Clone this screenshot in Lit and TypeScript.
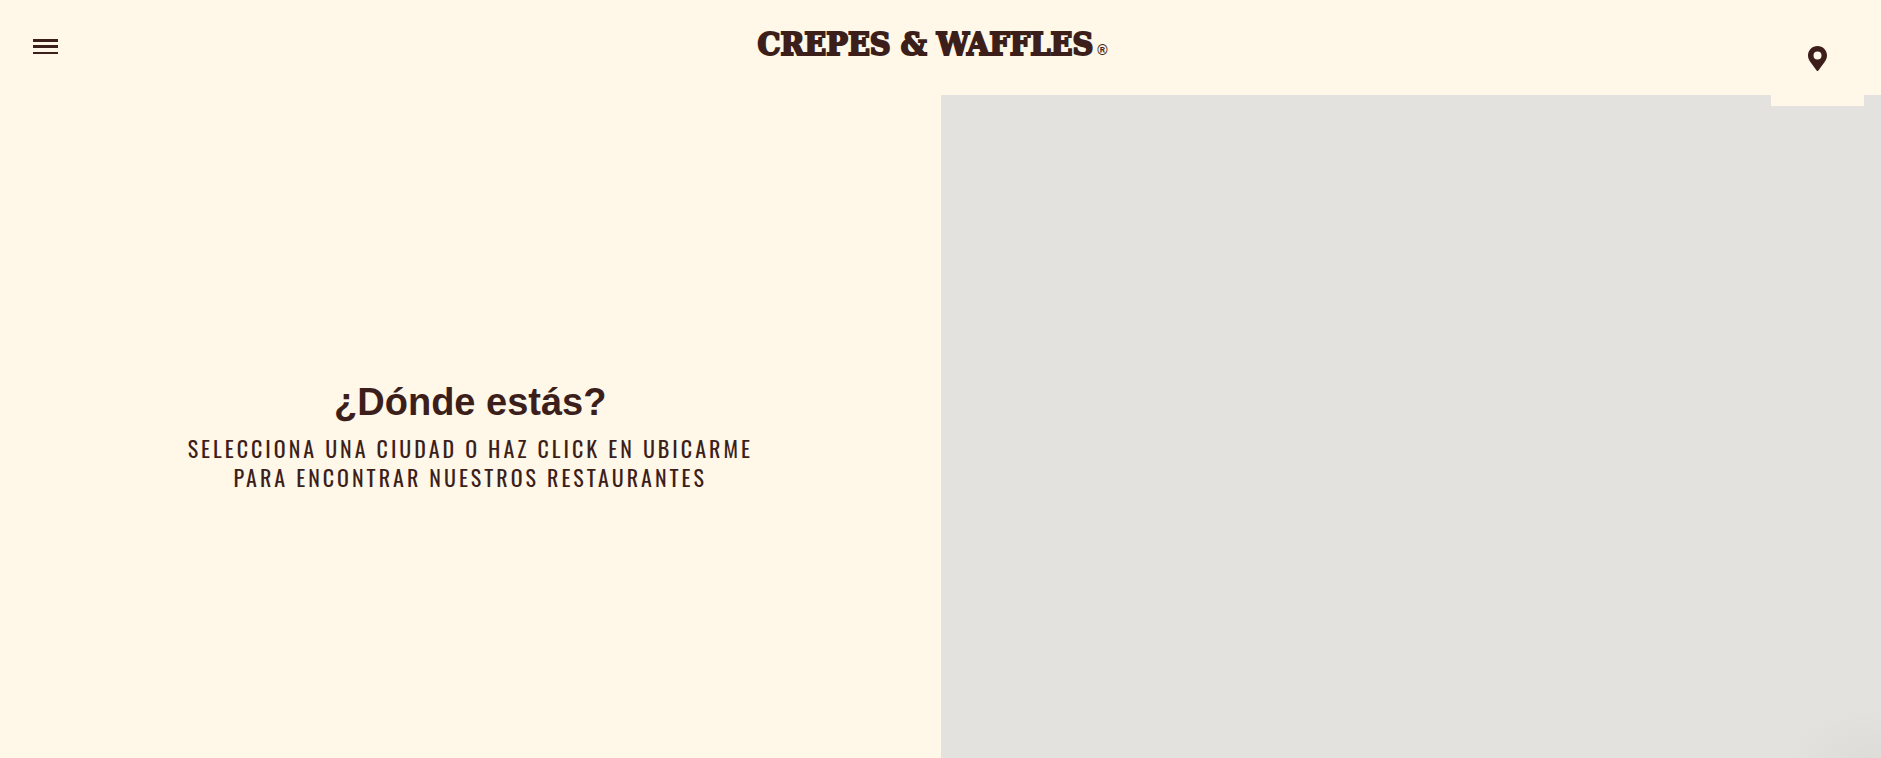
import { LitElement, html, css } from "lit";
import { customElement } from "lit/decorators.js";

@customElement("site-header")
class SiteHeader extends LitElement {
  static styles = css`
    :host {
      display: block;
      position: relative;
      z-index: 1;
      background: #fff7e8;
    }
    .bar {
      display: grid;
      grid-template-columns: 1fr auto 1fr;
      align-items: center;
      height: 95px;
      padding: 0 33px 2px;
      box-sizing: border-box;
    }
    button {
      border: 0;
      padding: 0;
      background: none;
      color: inherit;
      cursor: pointer;
    }
    .menu {
      justify-self: start;
      display: block;
    }
    svg {
      display: block;
      fill: currentColor;
    }
    .brand {
      display: flex;
      align-items: baseline;
      gap: 4px;
      padding-bottom: 6px;
      margin-right: 16px;
      color: inherit;
      text-decoration: none;
      white-space: nowrap;
      font: bold 32px/40px "DejaVu Serif Condensed", "DejaVu Serif", serif;
      font-stretch: condensed;
      -webkit-text-stroke: 2px currentColor;
    }
    .mark {
      font: bold 14px/16px "Liberation Sans", sans-serif;
      -webkit-text-stroke: 0;
    }
    .locate {
      position: absolute;
      top: 0;
      right: 17px;
      display: grid;
      place-items: center;
      width: 93px;
      height: 106px;
      padding-top: 11px;
      box-sizing: border-box;
      background: #fff7e8;
    }
  `;

  render() {
    return html`
      <div class="bar">
        <button class="menu" aria-label="Menú">
          <svg width="25" height="15" viewBox="0 0 25 15" shape-rendering="crispEdges">
            <rect width="25" height="3" />
            <rect y="6" width="25" height="3" />
            <rect y="13" width="25" height="2" />
          </svg>
        </button>
        <a class="brand" href="#"
          ><span>CREPES &amp; WAFFLES</span><span class="mark">®</span></a
        >
      </div>
      <button class="locate" aria-label="Ubicarme">
        <svg width="19" height="25" viewBox="0 0 19 25">
          <path
            fill-rule="evenodd"
            d="M9.5 0C4.2 0 0 4.2 0 9.4c0 2.4.9 4.3 2.2 6.3L8.6 24.500q.9 1 1.800 0l6.400-8.800c1.300-2 2.200-3.900 2.200-6.300C19 4.200 14.800 0 9.500 0zm0 5.400a4 4 0 1 1 0 8 4 4 0 0 1 0-8z"
          />
        </svg>
      </button>
    `;
  }
}

@customElement("app-root")
class AppRoot extends LitElement {
  static styles = css`
    :host {
      display: flex;
      flex-direction: column;
      min-height: 100vh;
      background: #fff7e8;
      color: #3c1f1b;
      font-family: "Liberation Sans", Arial, sans-serif;
    }
    main {
      flex: 1;
      display: grid;
      grid-template-columns: 1fr 1fr;
    }
    .intro {
      display: flex;
      flex-direction: column;
      align-items: center;
      justify-content: center;
      gap: 8px;
      padding: 16px 32px 0;
      text-align: center;
    }
    h1 {
      margin: 0;
      font-size: 38px;
      line-height: 48px;
    }
    p {
      margin: 0;
      max-width: 600px;
      font: 400 22px/29px Oswald, "Open Sans Condensed", "Liberation Sans Narrow", "Roboto Condensed", "Arial Narrow", sans-serif;
      letter-spacing: 3px;
      text-transform: uppercase;
    }
    .map {
      background: radial-gradient(80px 50px at calc(100% - 15px) 100%, #dddcd8, #e3e2de);
    }
  `;

  render() {
    return html`
      <site-header></site-header>
      <main>
        <section class="intro">
          <h1>¿Dónde estás?</h1>
          <p>Selecciona una ciudad o haz click en ubicarme<br />para encontrar nuestros restaurantes</p>
        </section>
        <section class="map" aria-label="Mapa"></section>
      </main>
    `;
  }
}
